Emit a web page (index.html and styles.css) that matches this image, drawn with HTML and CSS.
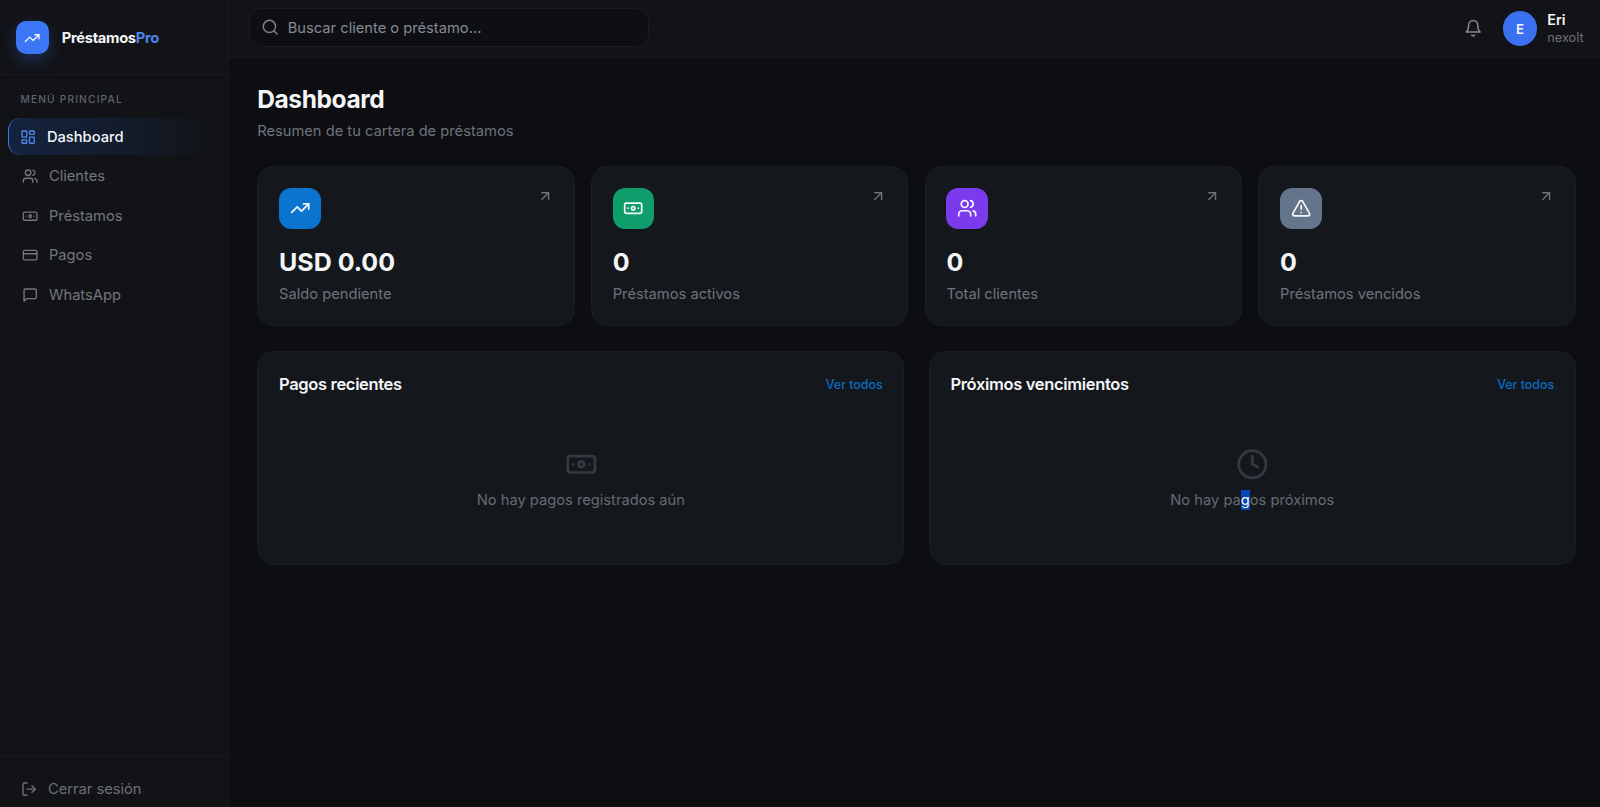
FILE: index.html

```html
<!DOCTYPE html>
<html lang="es">
<head>
  <meta charset="UTF-8">
  <meta name="viewport" content="width=device-width, initial-scale=1.0">
  <title>PréstamosPro</title>
  <link rel="stylesheet" href="styles.css">
</head>
<body>
  <!-- icon sprite -->
  <svg class="sprite" aria-hidden="true">
    <symbol id="i-trend" viewBox="0 0 24 24"><polyline points="22 7 13.5 15.5 8.5 10.5 2 17"/><polyline points="16 7 22 7 22 13"/></symbol>
    <symbol id="i-dash" viewBox="0 0 24 24"><rect x="3" y="3" width="7" height="9" rx="1"/><rect x="14" y="3" width="7" height="5" rx="1"/><rect x="14" y="12" width="7" height="9" rx="1"/><rect x="3" y="16" width="7" height="5" rx="1"/></symbol>
    <symbol id="i-users" viewBox="0 0 24 24"><path d="M16 21v-2a4 4 0 0 0-4-4H6a4 4 0 0 0-4 4v2"/><circle cx="9" cy="7" r="4"/><path d="M22 21v-2a4 4 0 0 0-3-3.87"/><path d="M16 3.13a4 4 0 0 1 0 7.75"/></symbol>
    <symbol id="i-note" viewBox="0 0 24 24"><rect x="2" y="6" width="20" height="12" rx="2"/><circle cx="12" cy="12" r="2"/><path d="M6 12h.01M18 12h.01"/></symbol>
    <symbol id="i-card" viewBox="0 0 24 24"><rect x="2" y="5" width="20" height="14" rx="2"/><line x1="2" y1="10" x2="22" y2="10"/></symbol>
    <symbol id="i-chat" viewBox="0 0 24 24"><path d="M21 15a2 2 0 0 1-2 2H7l-4 4V5a2 2 0 0 1 2-2h14a2 2 0 0 1 2 2z"/></symbol>
    <symbol id="i-logout" viewBox="0 0 24 24"><path d="M9 21H5a2 2 0 0 1-2-2V5a2 2 0 0 1 2-2h4"/><polyline points="16 17 21 12 16 7"/><line x1="21" y1="12" x2="9" y2="12"/></symbol>
    <symbol id="i-arrow" viewBox="0 0 24 24"><path d="M7 7h10v10"/><path d="M7 17 17 7"/></symbol>
    <symbol id="i-alert" viewBox="0 0 24 24"><path d="m21.73 18-8-14a2 2 0 0 0-3.48 0l-8 14A2 2 0 0 0 4 21h16a2 2 0 0 0 1.73-3Z"/><path d="M12 9v4"/><path d="M12 17h.01"/></symbol>
    <symbol id="i-bell" viewBox="0 0 24 24"><path d="M6 8a6 6 0 0 1 12 0c0 7 3 9 3 9H3s3-2 3-9"/><path d="M10.3 21a1.94 1.94 0 0 0 3.4 0"/></symbol>
    <symbol id="i-clock" viewBox="0 0 24 24"><circle cx="12" cy="12" r="10"/><polyline points="12 6 12 12 16 14"/></symbol>
    <symbol id="i-search" viewBox="0 0 24 24"><circle cx="11" cy="11" r="8"/><path d="m21 21-4.3-4.3"/></symbol>
  </svg>

  <aside class="sidebar">
    <div class="brand">
      <div class="brand-logo"><svg class="icon"><use href="#i-trend"/></svg></div>
      <div class="brand-name">Préstamos<span>Pro</span></div>
    </div>
    <div class="menu-label">MENÚ PRINCIPAL</div>
    <nav class="menu">
      <a class="menu-item active"><svg class="icon"><use href="#i-dash"/></svg>Dashboard</a>
      <a class="menu-item"><svg class="icon"><use href="#i-users"/></svg>Clientes</a>
      <a class="menu-item"><svg class="icon"><use href="#i-note"/></svg>Préstamos</a>
      <a class="menu-item"><svg class="icon"><use href="#i-card"/></svg>Pagos</a>
      <a class="menu-item"><svg class="icon"><use href="#i-chat"/></svg>WhatsApp</a>
    </nav>
    <div class="sidebar-footer">
      <a class="menu-item logout"><svg class="icon"><use href="#i-logout"/></svg>Cerrar sesión</a>
    </div>
  </aside>

  <div class="page">
    <header class="topbar">
      <div class="search">
        <svg class="icon"><use href="#i-search"/></svg>
        <span>Buscar cliente o préstamo...</span>
      </div>
      <div class="top-right">
        <svg class="icon bell"><use href="#i-bell"/></svg>
        <div class="avatar">E</div>
        <div class="user">
          <div class="user-name">Eri</div>
          <div class="user-org">nexolt</div>
        </div>
      </div>
    </header>

    <main class="content">
      <h1 class="title">Dashboard</h1>
      <p class="subtitle">Resumen de tu cartera de préstamos</p>

      <section class="stats">
        <div class="stat">
          <div class="stat-top">
            <div class="stat-icon blue"><svg class="icon"><use href="#i-trend"/></svg></div>
            <svg class="icon arrow"><use href="#i-arrow"/></svg>
          </div>
          <div class="stat-value">USD 0.00</div>
          <div class="stat-label">Saldo pendiente</div>
        </div>
        <div class="stat">
          <div class="stat-top">
            <div class="stat-icon green"><svg class="icon"><use href="#i-note"/></svg></div>
            <svg class="icon arrow"><use href="#i-arrow"/></svg>
          </div>
          <div class="stat-value">0</div>
          <div class="stat-label">Préstamos activos</div>
        </div>
        <div class="stat">
          <div class="stat-top">
            <div class="stat-icon purple"><svg class="icon"><use href="#i-users"/></svg></div>
            <svg class="icon arrow"><use href="#i-arrow"/></svg>
          </div>
          <div class="stat-value">0</div>
          <div class="stat-label">Total clientes</div>
        </div>
        <div class="stat">
          <div class="stat-top">
            <div class="stat-icon slate"><svg class="icon"><use href="#i-alert"/></svg></div>
            <svg class="icon arrow"><use href="#i-arrow"/></svg>
          </div>
          <div class="stat-value">0</div>
          <div class="stat-label">Préstamos vencidos</div>
        </div>
      </section>

      <section class="panels">
        <div class="panel">
          <div class="panel-head">
            <h2>Pagos recientes</h2>
            <a class="panel-link">Ver todos</a>
          </div>
          <div class="empty">
            <svg class="icon"><use href="#i-note"/></svg>
            <p>No hay pagos registrados aún</p>
          </div>
        </div>
        <div class="panel">
          <div class="panel-head">
            <h2>Próximos vencimientos</h2>
            <a class="panel-link">Ver todos</a>
          </div>
          <div class="empty">
            <svg class="icon"><use href="#i-clock"/></svg>
            <p>No hay pa<span class="picked">g</span>os próximos</p>
          </div>
        </div>
      </section>
    </main>
  </div>
</body>
</html>
```

FILE: styles.css

```css
html {
  font-size: 16.33px;
}
* {
  box-sizing: border-box;
}
body {
  margin: 0;
  height: 100vh;
  overflow: hidden;
  display: flex;
  background-color: #0c0e12;
  color: #f4f5f7;
  font-family: Inter, "Liberation Sans", sans-serif;
}
.sprite {
  display: none;
}
.icon {
  width: 1rem;
  height: 1rem;
  flex: none;
  fill: none;
  stroke: currentColor;
  stroke-width: 2;
  stroke-linecap: round;
  stroke-linejoin: round;
}

/* sidebar */
.sidebar {
  width: 14rem;
  flex: none;
  display: flex;
  flex-direction: column;
  background-color: #121317;
  border-right: 1px solid #16181d;
}
.brand {
  height: 4.5625rem;
  flex: none;
  display: flex;
  align-items: center;
  gap: 0.78rem;
  padding: 0.125rem 1rem 0;
  border-bottom: 1px solid #1a1c21;
}
.brand-logo {
  width: 2rem;
  height: 2rem;
  display: flex;
  align-items: center;
  justify-content: center;
  border-radius: 0.625rem;
  background-color: #3b76f6;
  box-shadow: 0 6px 16px rgba(59, 118, 246, 0.28);
  color: #f2f6ff;
}
.brand-name {
  font-size: 0.9rem;
  font-weight: 700;
  letter-spacing: -0.02em;
}
.brand-name span {
  color: #4a86ea;
}
.menu-label {
  margin: 1.125rem 0 0.8rem 1.25rem;
  font-size: 0.625rem;
  font-weight: 500;
  letter-spacing: 0.115em;
  color: #5f636c;
}
.menu {
  display: flex;
  flex-direction: column;
  gap: 0.125rem;
  padding: 0 0.5rem;
}
.menu-item {
  display: flex;
  align-items: center;
  gap: 0.625rem;
  height: 2.3rem;
  padding-left: 0.875rem;
  border-radius: 0.75rem;
  font-size: 0.9rem;
  color: #73767e;
}
.menu-item.active {
  padding-left: 0.6875rem;
  margin-right: 0.5rem;
  font-weight: 500;
  color: #f4f6fa;
  background: linear-gradient(90deg, #14233e 0%, #131c2c 55%, rgba(18, 19, 23, 0) 100%);
  border-left: 1px solid #3d78d8;
}
.menu-item.active .icon {
  color: #4f8be6;
}
.sidebar-footer {
  height: 3.15rem;
  flex: none;
  margin-top: auto;
  padding: 0.82rem 0.5rem 0;
  border-top: 1px solid #1a1c21;
}
.logout {
  padding-left: 0.8125rem;
  color: #6c6f77;
}

/* top bar */
.page {
  flex: 1;
  min-width: 0;
  display: flex;
  flex-direction: column;
}
.topbar {
  height: 3.5625rem;
  flex: none;
  display: flex;
  align-items: center;
  justify-content: space-between;
  padding: 0 1rem 0 1.25rem;
  background-color: #121317;
  border-bottom: 1px solid #16181d;
}
.search {
  width: 24.5rem;
  height: 2.4rem;
  display: flex;
  align-items: center;
  gap: 0.5rem;
  margin-top: -0.125rem;
  padding-left: 0.6875rem;
  border: 1px solid #1b1d23;
  border-radius: 0.75rem;
  background-color: #0d0f12;
  font-size: 0.9rem;
  color: #868a92;
}
.search .icon {
  width: 1.125rem;
  height: 1.125rem;
  color: #7b7f87;
}
.top-right {
  display: flex;
  align-items: center;
}
.bell {
  width: 1.125rem;
  height: 1.125rem;
  margin-right: 1.25rem;
  color: #85888f;
}
.avatar {
  width: 2.1rem;
  height: 2.1rem;
  display: flex;
  align-items: center;
  justify-content: center;
  margin-right: 0.625rem;
  border-radius: 50%;
  background-color: #3b70ef;
  font-size: 0.8125rem;
  font-weight: 600;
}
.user-name {
  font-size: 0.875rem;
  font-weight: 600;
  line-height: 1.1;
}
.user-org {
  margin-top: 0.1875rem;
  font-size: 0.78rem;
  line-height: 1.2;
  color: #6f727a;
}

/* main */
.content {
  flex: 1;
  padding: 1.5rem 1.5rem 0 1.75rem;
}
.title {
  margin: 0;
  font-size: 1.5rem;
  font-weight: 700;
  line-height: 2rem;
  letter-spacing: -0.015em;
}
.subtitle {
  margin: 0.375rem 0 0;
  font-size: 0.9rem;
  line-height: 1.25rem;
  color: #6f737b;
}
.stats {
  display: grid;
  grid-template-columns: repeat(4, 1fr);
  gap: 1rem;
  margin-top: 1.5rem;
}
.stat {
  height: 9.8rem;
  padding: 1.25rem 1.25rem 0 1.28rem;
  border: 1px solid #1a1e24;
  border-radius: 1rem;
  background-color: #14181d;
}
.stat-top {
  display: flex;
  justify-content: space-between;
}
.stat-icon {
  width: 2.55rem;
  height: 2.55rem;
  display: flex;
  align-items: center;
  justify-content: center;
  border-radius: 0.75rem;
  color: #f4f7fb;
}
.stat-icon .icon {
  width: 1.25rem;
  height: 1.25rem;
}
.blue { background-color: #0a74cf; }
.green { background-color: #0f9d6c; }
.purple { background-color: #7c3aed; }
.slate { background-color: #64748b; }
.arrow {
  color: #6f737b;
}
.stat-value {
  margin-top: 1rem;
  font-size: 1.53rem;
  font-weight: 700;
  line-height: 2rem;
}
.stat-label {
  margin-top: 0.375rem;
  font-size: 0.9rem;
  line-height: 1.25rem;
  color: #6f737b;
}
.panels {
  display: grid;
  grid-template-columns: 1fr 1fr;
  gap: 1.5rem;
  margin-top: 1.5rem;
}
.panel {
  height: 13.1rem;
  padding: 1.25rem 1.25rem 0 1.28rem;
  border: 1px solid #1a1e24;
  border-radius: 1rem;
  background-color: #14181d;
}
.panel-head {
  display: flex;
  align-items: center;
  justify-content: space-between;
}
.panel-head h2 {
  margin: 0;
  font-size: 1.01rem;
  font-weight: 600;
  line-height: 1.5rem;
  letter-spacing: -0.02em;
}
.panel-link {
  font-size: 0.76rem;
  font-weight: 500;
  color: #0a6cc0;
}
.empty {
  display: flex;
  flex-direction: column;
  align-items: center;
  margin-top: 3.13rem;
  color: #353941;
}
.empty .icon {
  width: 2rem;
  height: 2rem;
}
.empty p {
  margin: 0.5625rem 0 0;
  font-size: 0.9rem;
  line-height: 1.25rem;
  color: #666a72;
}
.picked {
  display: inline-block;
  background-color: #0b46b8;
  color: #f4f6fa;
}
```
